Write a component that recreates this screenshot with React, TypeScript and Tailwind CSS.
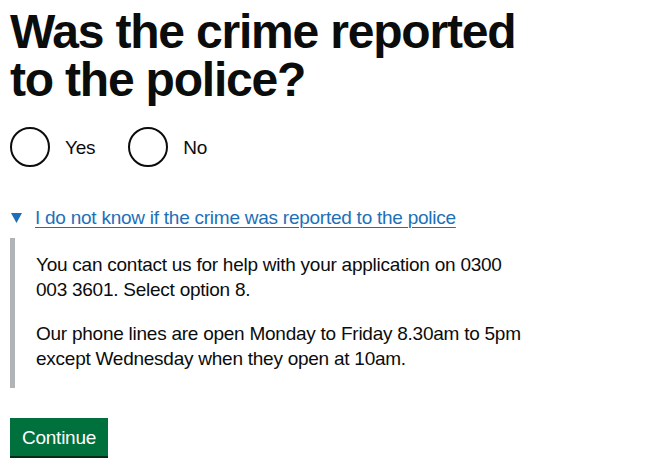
import React from 'react';

const font = { fontFamily: '"Liberation Sans", Arial, sans-serif' };

export default function App() {
  return (
    <div className="min-h-screen bg-white text-[#0b0c0c] px-[10px]" style={font}>
      <h1 className="pt-[8px] text-[48px] font-bold leading-[48px] tracking-[-1.2px]">
        Was the crime reported
        <br />
        to the police?
      </h1>

      <div className="mt-[23px] flex items-center text-[19px] leading-[25px] tracking-[-0.25px]">
        <label className="flex items-center">
          <span className="h-[40px] w-[40px] rounded-full border-2 border-[#0b0c0c]" />
          <span className="ml-[15px]">Yes</span>
        </label>
        <label className="ml-[33px] flex items-center">
          <span className="h-[40px] w-[40px] rounded-full border-2 border-[#0b0c0c]" />
          <span className="ml-[15px]">No</span>
        </label>
      </div>

      <div className="mt-[38px] text-[19px] leading-[25px] tracking-[-0.25px]">
        <div className="flex items-center text-[#1d70b8]">
          <svg width="11" height="10" viewBox="0 0 11 10" className="ml-[1px]">
            <polygon points="0,0 11,0 5.5,10" fill="#1d70b8" />
          </svg>
          <span className="ml-[13px] underline underline-offset-[3px] decoration-1">
            I do not know if the crime was reported to the police
          </span>
        </div>
        <div className="mt-[8px] border-l-[5px] border-[#b1b4b6] pl-[21px] pt-[14px] pb-[17px] whitespace-nowrap">
          <p>
            You can contact us for help with your application on 0300
            <br />
            003 3601. Select option 8.
          </p>
          <p className="mt-[19px]">
            Our phone lines are open Monday to Friday 8.30am to 5pm
            <br />
            except Wednesday when they open at 10am.
          </p>
        </div>
      </div>

      <button className="mt-[30px] bg-[#00703c] text-white text-[19px] leading-[25px] tracking-[-0.25px] px-[12px] pt-[7px] pb-[6px] shadow-[0_2px_0_#002d18]">
        Continue
      </button>
    </div>
  );
}
